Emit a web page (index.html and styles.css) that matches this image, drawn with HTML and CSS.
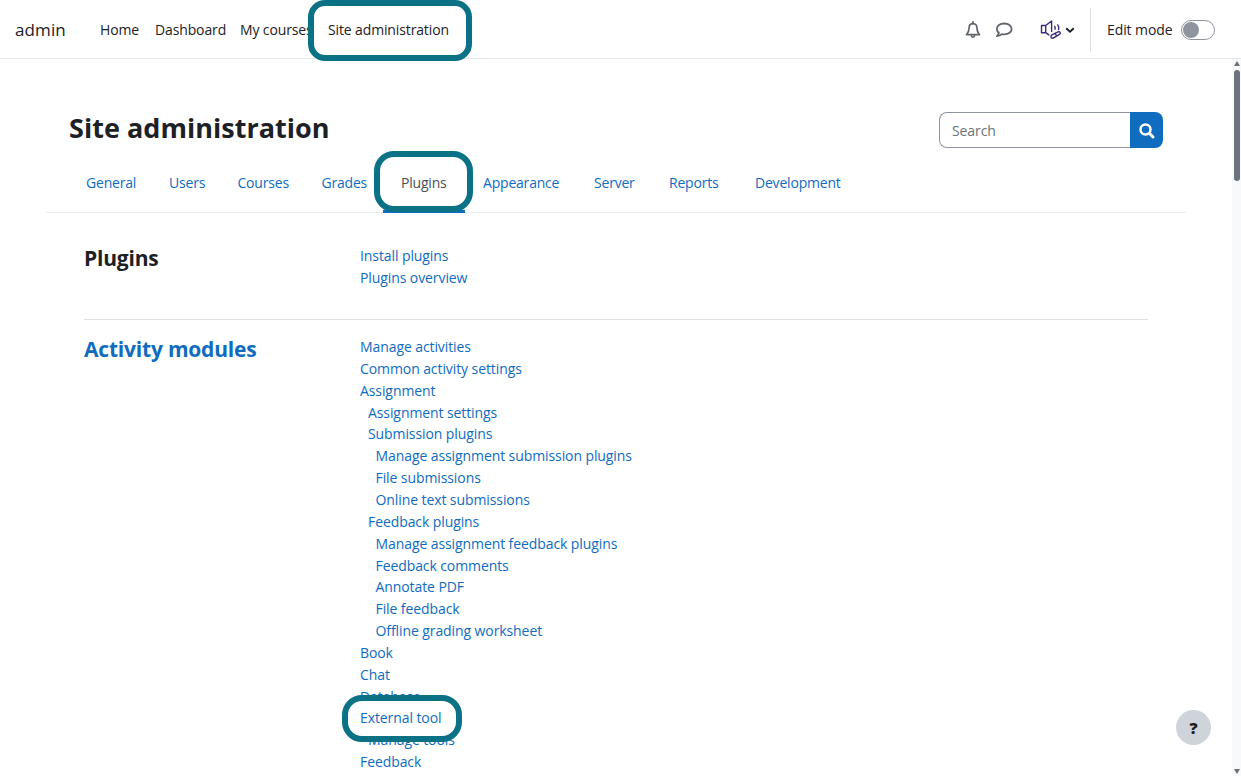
FILE: index.html
```html
<!DOCTYPE html>
<html lang="en">
<head>
    <meta charset="UTF-8">
    <meta name="viewport" content="width=device-width, initial-scale=1.0">
    <title>Site administration</title>
    <link rel="stylesheet" href="styles.css">
</head>
<body>
    <header class="navbar">
        <a class="brand" href="#">admin</a>
        <nav class="main-nav">
            <a href="#">Home</a>
            <a href="#">Dashboard</a>
            <a href="#">My courses</a>
            <a href="#" class="marked mark-nav"><span>Site administration</span></a>
        </nav>
        <div class="user-nav">
            <svg class="icon-bell" width="16" height="18" viewBox="0 0 16 18" fill="none" stroke="#5f656b" stroke-width="1.7" stroke-linejoin="round">
                <path d="M8 2.6C5.3 2.6 4.1 4.5 4.1 6.8C4.1 10 3.2 11.8 1.5 13.7H14.5C12.8 11.8 11.9 10 11.9 6.8C11.9 4.5 10.7 2.6 8 2.6Z"/>
                <path d="M8 .8V2.6M6.4 14.5C6.5 15.7 7.1 16.2 8 16.2S9.5 15.7 9.6 14.5" stroke-linecap="round"/>
            </svg>
            <svg class="icon-chat" width="18" height="16" viewBox="0 0 18 16" fill="none" stroke="#5f656b" stroke-width="1.8" stroke-linejoin="round">
                <path d="M9.3 1.5C5 1.5 1.8 3.8 1.8 6.9C1.8 8.5 2.6 9.8 3.9 10.8C3.7 12.2 2.8 13.2 1.9 14.1C4 14 5.7 13.2 6.8 12.1C7.6 12.3 8.4 12.4 9.3 12.4C13.5 12.4 16.6 10 16.6 6.9S13.500 1.500 9.300 1.500Z"/>
            </svg>
            <svg class="icon-speaker" width="22" height="20" viewBox="0 0 22 20" fill="none" stroke="#3d2a78" stroke-width="1.4" stroke-linejoin="round" stroke-linecap="round">
                <path d="M1.500 5.500H5.700V12.700H1.500ZM5.700 5.500L11.600 1V11.500M5.700 12.700L8.900 14.900"/>
                <path d="M14.700 6.300C15.300 7.200 15.400 8.300 15 9.200M17.700 4.900C19 6.600 19.200 8.200 18.600 9.700"/>
                <path d="M12.400 14.700L18 11.900C20 11.200 21.200 13.200 19.500 14.400L14 17.700C11.500 19.200 9.500 16.300 12.400 14.700ZM15.200 13.300L16.500 16"/>
            </svg>
            <svg class="icon-caret" width="10" height="7" viewBox="0 0 10 7" fill="none" stroke="#1d2125" stroke-width="1.9">
                <path d="M1.200 1.300L5 4.800L8.800 1.300"/>
            </svg>
            <div class="edit-mode">
                <span>Edit mode</span>
                <span class="switch"></span>
            </div>
        </div>
    </header>

    <main class="page">
        <div class="page-header">
            <h1>Site administration</h1>
            <form class="search">
                <input type="text" placeholder="Search" aria-label="Search">
                <button type="button" aria-label="Search">
                    <svg width="17" height="17" viewBox="0 0 17 17" fill="none" stroke="#fff">
                        <circle cx="7.5" cy="7.5" r="5" stroke-width="2.5"/>
                        <path d="M11.300 11.300L15 15" stroke-width="3" stroke-linecap="round"/>
                    </svg>
                </button>
            </form>
        </div>

        <nav class="tabs">
            <a href="#">General</a>
            <a href="#">Users</a>
            <a href="#">Courses</a>
            <a href="#">Grades</a>
            <a href="#" class="active marked mark-tab"><span>Plugins</span></a>
            <a href="#">Appearance</a>
            <a href="#">Server</a>
            <a href="#">Reports</a>
            <a href="#">Development</a>
        </nav>

        <section class="row">
            <h2>Plugins</h2>
            <ul>
                <li><a href="#">Install plugins</a></li>
                <li><a href="#">Plugins overview</a></li>
            </ul>
        </section>
        <section class="row">
            <h2><a href="#">Activity modules</a></h2>
            <ul>
                <li><a href="#">Manage activities</a></li>
                <li><a href="#">Common activity settings</a></li>
                <li><a href="#">Assignment</a></li>
                <li class="level-1"><a href="#">Assignment settings</a></li>
                <li class="level-1"><a href="#">Submission plugins</a></li>
                <li class="level-2"><a href="#">Manage assignment submission plugins</a></li>
                <li class="level-2"><a href="#">File submissions</a></li>
                <li class="level-2"><a href="#">Online text submissions</a></li>
                <li class="level-1"><a href="#">Feedback plugins</a></li>
                <li class="level-2"><a href="#">Manage assignment feedback plugins</a></li>
                <li class="level-2"><a href="#">Feedback comments</a></li>
                <li class="level-2"><a href="#">Annotate PDF</a></li>
                <li class="level-2"><a href="#">File feedback</a></li>
                <li class="level-2"><a href="#">Offline grading worksheet</a></li>
                <li><a href="#">Book</a></li>
                <li><a href="#">Chat</a></li>
                <li><a href="#">Database</a></li>
                <li class="marked mark-tool"><a href="#">External tool</a></li>
                <li class="level-1"><a href="#">Manage tools</a></li>
                <li><a href="#">Feedback</a></li>
            </ul>
        </section>
    </main>

    <button class="help" type="button">?</button>
    <div class="scrollbar">
        <span class="arrow-up"></span>
        <span class="thumb"></span>
        <span class="arrow-down"></span>
    </div>
</body>
</html>
```
FILE: styles.css
```css
*,
*::before {
    margin: 0;
    padding: 0;
    box-sizing: border-box;
}

body {
    height: 776px;
    overflow: hidden;
    background: #fff;
    color: #1d2125;
    font-family: 'Segoe UI', 'Open Sans', 'Noto Sans', sans-serif;
    font-size: 14px;
    letter-spacing: -0.09px;
    line-height: 21.84px;
}

a {
    color: #0f6cbf;
    text-decoration: none;
    white-space: nowrap;
}

ul {
    list-style: none;
}

/* navbar */
.navbar {
    display: flex;
    align-items: center;
    height: 59px;
    padding: 2px 0 0 15px;
    border-bottom: 1px solid #e3e5e8;
}

.navbar a {
    color: #1d2125;
}

.navbar .brand {
    width: 85px;
    font-size: 17px;
    letter-spacing: 0.1px;
}

.main-nav {
    display: grid;
    grid-template-columns: 55px 85px 88px 121px;
    letter-spacing: -0.13px;
}

.user-nav {
    display: flex;
    align-items: center;
    height: 100%;
    margin-left: auto;
    padding-right: 26.500px;
}

.icon-chat {
    margin-left: 14px;
}

.icon-speaker {
    margin-left: 27px;
}

.icon-caret {
    margin-left: 3px;
}

.edit-mode {
    display: flex;
    align-items: center;
    height: 44px;
    margin-left: 15px;
    padding-left: 16px;
    border-left: 1px solid #dee2e6;
}

.switch {
    width: 34px;
    height: 20px;
    margin-left: 8px;
    padding: 1px;
    border: 1px solid #8f959e;
    border-radius: 10px;
}

.switch::before {
    content: '';
    display: block;
    width: 16px;
    height: 16px;
    border-radius: 50%;
    background: #8f959e;
}

/* highlight rings */
.marked {
    position: relative;
    z-index: 1;
}

.marked::before {
    content: '';
    position: absolute;
    border: 6px solid #0b7285;
    background: #fff;
}

.marked > * {
    position: relative;
}

.mark-nav::before {
    inset: -19px -23px -20px -20px;
    border-radius: 17px;
}

.mark-tab::before {
    inset: -21px -8px -2px -9px;
    border-radius: 20px;
}

.mark-tool::before {
    top: -12px;
    left: -18px;
    width: 120px;
    height: 47px;
    border-radius: 20px;
}

/* page header */
.page {
    width: 1140px;
    margin-left: 46px;
    padding-top: 53px;
}

.page-header {
    display: flex;
    justify-content: space-between;
    height: 60px;
    padding: 0 23px;
}

h1 {
    font-size: 27px;
    font-weight: 700;
    line-height: 32px;
    letter-spacing: 0.03px;
}

.search {
    display: flex;
    width: 224px;
    height: 36px;
}

.search input {
    width: 191px;
    padding: 2px 12px 0;
    border: 1px solid #8f959e;
    border-right: 0;
    border-radius: 8px 0 0 8px;
    font: inherit;
    letter-spacing: inherit;
}

.search input::placeholder {
    color: #6a737b;
}

.search button {
    display: flex;
    align-items: center;
    justify-content: center;
    width: 33px;
    border: 0;
    border-radius: 0 8px 8px 0;
    background: #0f6cbf;
}

.tabs {
    display: grid;
    grid-template-columns: 83px 68.5px 84px 61.5px 100px 111px 75px 86px 86px;
    height: 41px;
    padding-left: 40px;
    border-bottom: 1px solid #e9ebee;
    letter-spacing: -0.2px;
}

.tabs .active {
    width: 82px;
    height: 41px;
    padding-left: 18px;
    border-bottom: 3px solid #0f6cbf;
}

.tabs .active span {
    color: #495057;
}

/* settings list */
.row {
    display: grid;
    grid-template-columns: 276px 1fr;
    margin: 0 38px;
    padding: 16.4px 0 30px;
}

.tabs + .row {
    padding-top: 32px;
    border-bottom: 1px solid #dee2e6;
}

h2 {
    font-size: 21px;
    font-weight: 700;
    line-height: 26px;
    letter-spacing: -0.2px;
}

.level-1 {
    padding-left: 8px;
}

.level-2 {
    padding-left: 15.5px;
}

.help {
    position: absolute;
    right: 30px;
    bottom: 31px;
    width: 35px;
    height: 35px;
    border: 0;
    border-radius: 50%;
    background: #ced4da;
    color: #1d2125;
    font: 800 16px 'Open Sans', sans-serif;
}

/* window scrollbar */
.scrollbar {
    position: absolute;
    top: 59px;
    right: 0;
    bottom: 0;
    display: flex;
    flex-direction: column;
    align-items: center;
    width: 9px;
    padding: 2px 0;
    background: #f8f9fa;
}

.arrow-up,
.arrow-down {
    border: 3px solid transparent;
}

.arrow-up {
    border-top: 0;
    border-bottom: 5px solid #6a737b;
}

.arrow-down {
    margin-top: auto;
    border-bottom: 0;
    border-top: 5px solid #6a737b;
}

.thumb {
    width: 6px;
    height: 111px;
    margin-top: 4px;
    border-radius: 3px;
    background: #6a737b;
}
```
